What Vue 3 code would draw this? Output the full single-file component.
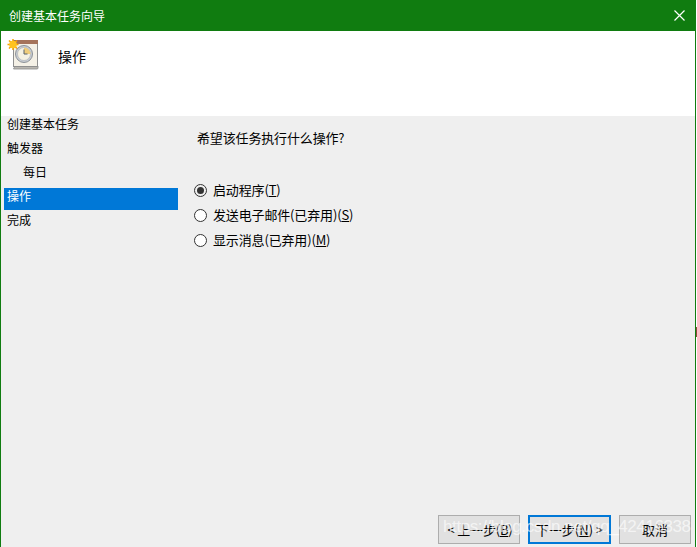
<template>
  <div class="win">
    <header class="titlebar">
      <span class="titlebar__text">创建基本任务向导</span>
      <svg class="titlebar__close" width="11" height="11" viewBox="0 0 11 11">
        <path d="M0.5 0.5L10.5 10.5M10.5 0.5L0.5 10.5" stroke="#fff" stroke-width="1.2" fill="none" />
      </svg>
    </header>

    <section class="head">
      <svg class="head__icon" width="33" height="31" viewBox="0 0 33 31">
        <path d="M9 27H32V29.5L31 30H7.500z" fill="#b9b6b0" stroke="#8b8b8b" stroke-width="0.8" />
        <rect x="7.500" y="1.500" width="24" height="26" fill="#f4f0e6" stroke="#8f8f8f" />
        <rect x="7" y="1" width="25" height="4" fill="#a5735b" />
        <circle cx="18" cy="15" r="8.500" fill="#c8cdd4" stroke="#8d9298" />
        <circle cx="18" cy="15" r="6.500" fill="#f5f1e2" stroke="#a9adb2" stroke-width="0.6" />
        <path d="M18 15V8.500A6.500 6.500 0 0 1 24.500 15z" fill="#f0cd7a" />
        <path d="M18 10.500V15h3.500" stroke="#59626d" stroke-width="1" fill="none" />
        <path d="M7 0v11M1.500 5.500h11M3 1.500l8 8M11 1.500l-8 8" stroke="#f6a200" stroke-width="1.5" />
        <circle cx="7" cy="5.500" r="3.800" fill="#ffc31f" />
      </svg>
      <h1 class="head__title">操作</h1>
    </section>

    <main class="body">
      <nav class="steps">
        <div v-for="step in steps" :key="step.label" class="step" :class="{ 'step--on': step.on, 'step--sub': step.sub }">
          {{ step.label }}
        </div>
      </nav>

      <div class="content">
        <p class="content__q">希望该任务执行什么操作?</p>
        <label v-for="opt in options" :key="opt.key" class="opt">
          <span class="opt__dot" :class="{ 'opt__dot--on': opt.on }"></span>
          <span class="opt__text">{{ opt.label }}(<u>{{ opt.key }}</u>)</span>
        </label>
      </div>
    </main>

    <footer class="foot">
      <button class="btn btn--prev">&lt; 上一步(<u>B</u>)</button>
      <button class="btn btn--next">下一步(<u>N</u>) &gt;</button>
      <button class="btn btn--cancel">取消</button>
    </footer>

    <div class="watermark">https://blog.csdn.net/qq_42416338</div>
    <span class="edge"></span>
  </div>
</template>

<script setup>
const steps = [
  { label: '创建基本任务' },
  { label: '触发器' },
  { label: '每日', sub: true },
  { label: '操作', on: true },
  { label: '完成' },
]

const options = [
  { label: '启动程序', key: 'T', on: true },
  { label: '发送电子邮件(已弃用)', key: 'S' },
  { label: '显示消息(已弃用)', key: 'M' },
]
</script>

<style scoped>
.win {
  position: relative;
  width: 696px;
  height: 547px;
  display: flex;
  flex-direction: column;
  box-sizing: border-box;
  border-left: 1px solid #107c10;
  border-right: 1px solid #107c10;
  background: #efefef;
  font-family: "Noto Sans CJK SC", "Noto Sans", sans-serif;
  font-size: 12px;
  color: #000;
}

.titlebar {
  height: 31px;
  flex: none;
  display: flex;
  align-items: center;
  justify-content: space-between;
  padding: 0 10px 0 8px;
  background: #107c10;
  color: #fff;
}

.head {
  height: 85px;
  flex: none;
  display: flex;
  align-items: flex-start;
  background: #fff;
  padding: 8px 0 0 5px;
  box-sizing: border-box;
}

.head__icon {
  flex: none;
}

.head__title {
  margin: 7px 0 0 19px;
  font-size: 14px;
  font-weight: 400;
  line-height: 20px;
}

.body {
  flex: 1;
  display: flex;
  min-height: 0;
}

.steps {
  width: 174px;
  margin-left: 3px;
  flex: none;
  display: flex;
  flex-direction: column;
  gap: 8px;
}

.step {
  height: 16px;
  line-height: 16px;
  padding-left: 3px;
}

.step--sub {
  padding-left: 19px;
}

.step--on {
  height: 22px;
  margin-bottom: -6px;
  background: #0078d7;
  color: #fff;
}

.content {
  padding: 12px 0 0 15px;
  font-size: 13px;
  letter-spacing: -0.15px;
}

.content__q {
  margin: 0 0 30px 4px;
  line-height: 20px;
}

.opt {
  display: flex;
  align-items: center;
  gap: 6px;
  height: 25px;
  padding-left: 1px;
}

.opt__text {
  margin-top: -3px;
}

.opt__dot {
  width: 13px;
  height: 13px;
  box-sizing: border-box;
  border: 1px solid #333;
  border-radius: 50%;
  background: #fff;
  flex: none;
  display: flex;
  align-items: center;
  justify-content: center;
}

.opt__dot--on {
  background: #efefef;
}

.opt__dot--on::after {
  content: "";
  width: 7px;
  height: 7px;
  border-radius: 50%;
  background: #333;
}

.foot {
  height: 32px;
  flex: none;
  display: flex;
  justify-content: flex-end;
  align-items: flex-start;
  gap: 8px;
  padding-right: 4px;
}

.btn {
  height: 29px;
  box-sizing: border-box;
  border: 1px solid #adadad;
  background: #e1e1e1;
  font: inherit;
  font-size: 13px;
  color: #000;
  padding: 0;
  white-space: nowrap;
}

.btn--prev {
  width: 82px;
  padding-left: 2px;
  letter-spacing: -0.2px;
}

.btn--next {
  width: 83px;
  border: 2px solid #0078d7;
}

.btn--cancel {
  width: 72px;
}

.watermark {
  position: absolute;
  left: 442px;
  top: 516px;
  font-family: "Liberation Sans", sans-serif;
  font-size: 17px;
  letter-spacing: -0.4px;
  line-height: 22px;
  color: rgba(255, 255, 255, 0.65);
  white-space: nowrap;
  pointer-events: none;
}

.edge {
  position: absolute;
  right: -2px;
  top: 327px;
  width: 1px;
  height: 10px;
  background: #8c4a3c;
}
</style>

<style>
html, body {
  background: #fff;
}
</style>
